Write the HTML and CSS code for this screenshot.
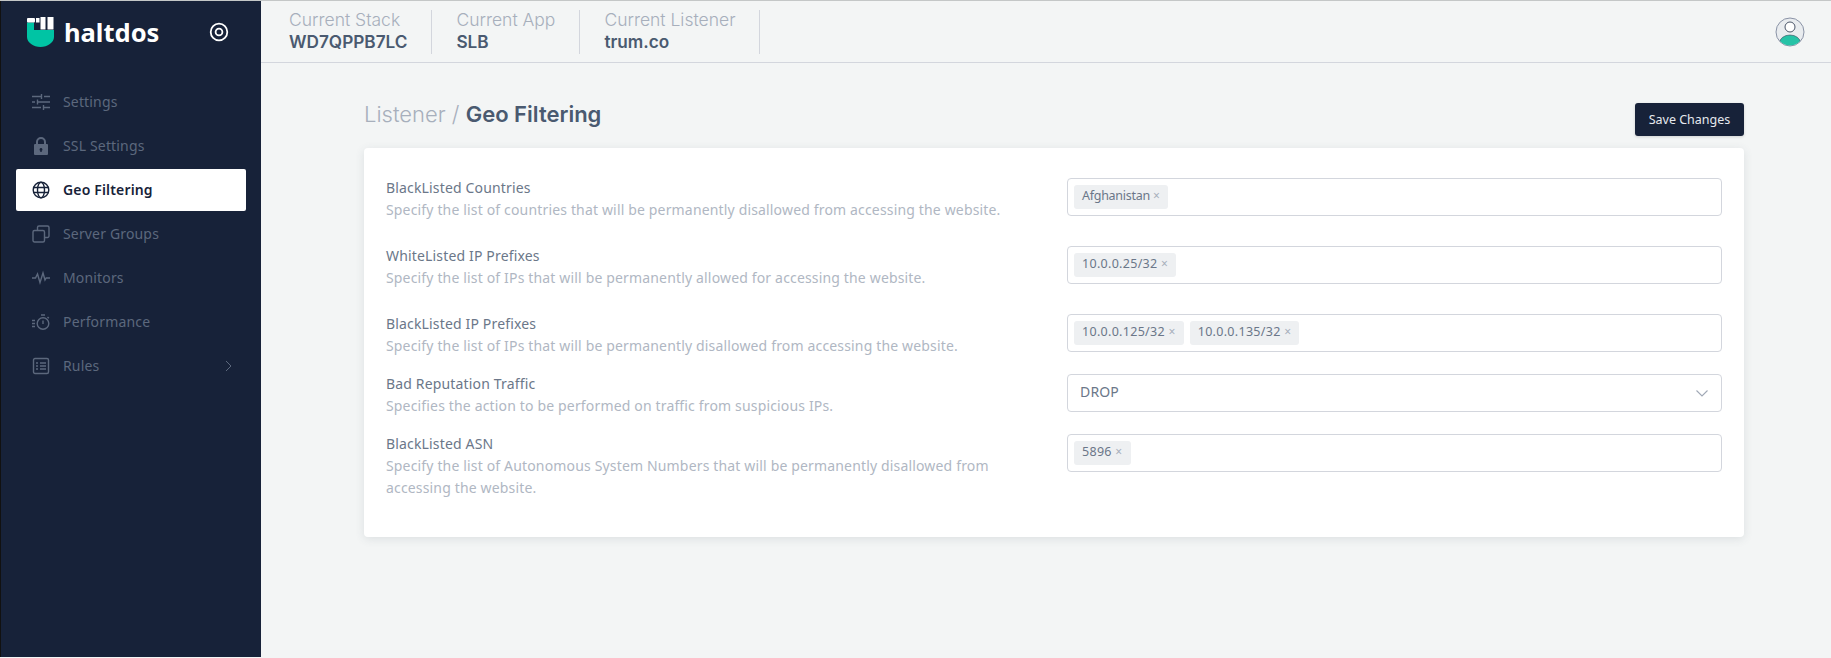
FILE: index.html
```html
<!DOCTYPE html>
<html lang="en">
<head>
<meta charset="utf-8">
<title>Geo Filtering</title>
<link rel="stylesheet" href="styles.css">
</head>
<body>
<div class="app">
  <aside class="sidebar">
    <div class="brand">
      <svg class="logo" width="27" height="30" viewBox="0 0 27 30">
        <path fill="#00c4a4" d="M0 5.500h7V13h20v7c0 5.500-6.500 10-13.500 10S0 25.500 0 20z"/>
        <rect fill="#fff" x="0" y="1" width="8" height="4.500" rx="1"/>
        <rect fill="#fff" x="9" y="1" width="3.500" height="4.500"/>
        <rect fill="#fff" x="13.500" y="0" width="5" height="12.500"/>
        <rect fill="#fff" x="20.500" y="0" width="6" height="12.500"/>
      </svg>
      <span class="brand-name">haltdos</span>
      <svg class="target" width="20" height="20" viewBox="0 0 20 20"><circle cx="10" cy="10" r="8.300" fill="none" stroke="#fff" stroke-width="1.800"/><circle cx="10" cy="10" r="3.400" fill="none" stroke="#fff" stroke-width="1.800"/></svg>
    </div>
    <nav class="nav">
      <a class="nav-item"><svg class="ico" viewBox="0 0 18 18"><path d="M0 3.500h9M12 3.500h6M9.500 1v5M0 9h3M6 9h12M5.500 6.500v5M0 14.500h9M12 14.500h6M11.500 12v5"/></svg><span>Settings</span></a>
      <a class="nav-item"><svg class="ico" viewBox="0 0 18 18"><path class="solid" fill-rule="evenodd" d="M4 7V5a5 5 0 0 1 10 0v2h1a1 1 0 0 1 1 1v9a1 1 0 0 1-1 1H3a1 1 0 0 1-1-1V8a1 1 0 0 1 1-1zm2 0h6V5a3 3 0 0 0-6 0zm3 4a1.500 1.500 0 0 0-.7 2.800V15h1.400v-1.200A1.500 1.500 0 0 0 9 11z"/></svg><span>SSL Settings</span></a>
      <a class="nav-item active"><svg class="ico" viewBox="0 0 18 18"><circle cx="9" cy="9" r="7.800"/><ellipse cx="9" cy="9" rx="3.500" ry="7.800"/><path d="M1.500 6.500h15M1.500 11.500h15"/></svg><span>Geo Filtering</span></a>
      <a class="nav-item"><svg class="ico" viewBox="0 0 18 18"><rect x="1" y="5.500" width="11.500" height="11.500" rx="1.500"/><path d="M5.500 5.500V2.500A1.500 1.500 0 0 1 7 1h8.500A1.500 1.500 0 0 1 17 2.500V11a1.500 1.500 0 0 1-1.500 1.500h-3"/></svg><span>Server Groups</span></a>
      <a class="nav-item"><svg class="ico" viewBox="0 0 18 18"><path d="M0 9h3.500L5.500 5l2.500 8.500L11 4l2 7 1.200-2H18"/></svg><span>Monitors</span></a>
      <a class="nav-item"><svg class="ico" viewBox="0 0 18 18"><circle cx="11" cy="10.500" r="5.800"/><path d="M11 7.500v3.500M9 2h4M15.500 4l1.300 1.300M0 7.500h3M0 10.500h3M0 13.500h3"/></svg><span>Performance</span></a>
      <a class="nav-item"><svg class="ico" viewBox="0 0 18 18"><rect x="1.500" y="1.500" width="15" height="15" rx="1.500"/><path d="M4 6h2M8 6h6M4 9h2M8 9h6M4 12h2M8 12h6"/></svg><span>Rules</span><svg class="chev" width="7" height="12" viewBox="0 0 7 12"><path d="M1 1l5 5-5 5"/></svg></a>
    </nav>
  </aside>
  <div class="main">
    <header class="topbar">
      <div class="crumb"><div class="crumb-key">Current Stack</div><div class="crumb-val">WD7QPPB7LC</div></div>
      <div class="crumb"><div class="crumb-key">Current App</div><div class="crumb-val">SLB</div></div>
      <div class="crumb"><div class="crumb-key">Current Listener</div><div class="crumb-val">trum.co</div></div>
      <svg class="avatar" width="30" height="30" viewBox="0 0 30 30">
        <defs><clipPath id="av"><circle cx="15" cy="15" r="13.500"/></clipPath></defs>
        <circle cx="15" cy="15" r="14" fill="#e9ecef" stroke="#8a93a6" stroke-width="1"/>
        <g clip-path="url(#av)"><ellipse cx="15" cy="26" rx="10.500" ry="8" fill="#26c2a6" stroke="#3f4d63" stroke-width=".6"/></g>
        <circle cx="15" cy="10" r="5" fill="#fff" stroke="#4a5568" stroke-width="1"/>
      </svg>
    </header>
    <main class="content">
      <div class="title-row">
        <h1 class="title"><span class="title-light">Listener / </span><span class="title-strong">Geo Filtering</span></h1>
        <button class="save">Save Changes</button>
      </div>
      <section class="card">
        <div class="row row-lg">
          <div class="label"><div class="name">BlackListed Countries</div><div class="desc">Specify the list of countries that will be permanently disallowed from accessing the website.</div></div>
          <div class="field"><span class="tag tag-word">Afghanistan <i>×</i></span></div>
        </div>
        <div class="row row-lg">
          <div class="label"><div class="name">WhiteListed IP Prefixes</div><div class="desc">Specify the list of IPs that will be permanently allowed for accessing the website.</div></div>
          <div class="field"><span class="tag">10.0.0.25/32 <i>×</i></span></div>
        </div>
        <div class="row">
          <div class="label"><div class="name">BlackListed IP Prefixes</div><div class="desc">Specify the list of IPs that will be permanently disallowed from accessing the website.</div></div>
          <div class="field"><span class="tag">10.0.0.125/32 <i>×</i></span><span class="tag">10.0.0.135/32 <i>×</i></span></div>
        </div>
        <div class="row">
          <div class="label"><div class="name">Bad Reputation Traffic</div><div class="desc">Specifies the action to be performed on traffic from suspicious IPs.</div></div>
          <div class="field select"><span class="select-value">DROP</span><svg class="caret" width="12" height="7" viewBox="0 0 12 7"><path d="M.5.500 6 6 11.500.500"/></svg></div>
        </div>
        <div class="row">
          <div class="label"><div class="name">BlackListed ASN</div><div class="desc">Specify the list of Autonomous System Numbers that will be permanently disallowed from accessing the website.</div></div>
          <div class="field"><span class="tag">5896 <i>×</i></span></div>
        </div>
      </section>
    </main>
  </div>
</div>
</body>
</html>
```
FILE: styles.css
```css
* { box-sizing: border-box; }
html, body { margin: 0; height: 100%; }
body { font-family: "Noto Sans", "Liberation Sans", sans-serif; font-size: 14px; line-height: 22px; letter-spacing: .16px; background: #f3f5f5; color: #4a5a70; overflow: hidden; }
.app { display: flex; height: 657px; border-top: 1px solid #c4c7c7; }
.sidebar { width: 261px; flex: none; background: #172239; border-left: 1px solid #111; }
.brand { display: flex; align-items: center; height: 60px; padding: 1px 0 0 26px; color: #fff; }
.logo { flex: none; }
.brand-name { margin-left: 10px; font-size: 25.500px; letter-spacing: 0; font-weight: 700; line-height: 30px; }
.target { margin-left: 50px; }
.nav { display: flex; flex-direction: column; gap: 2px; margin-top: 20px; padding: 0 15px; }
.nav-item { display: flex; align-items: center; height: 42px; padding-left: 16px; color: #5c687d; border-radius: 2px; }
.nav-item span { margin-left: 13px; margin-bottom: 1px; }
.nav-item.active { background: #fff; color: #172239; font-weight: 600; }
.ico { width: 18px; height: 18px; flex: none; fill: none; stroke: currentColor; stroke-width: 1.400; }
.ico .solid { fill: currentColor; stroke: none; }
.chev { margin-left: auto; margin-right: 14px; fill: none; stroke: #5c687d; stroke-width: 1; }
.main { flex: 1; display: flex; flex-direction: column; min-width: 0; }
.topbar { display: flex; align-items: center; height: 62px; flex: none; padding-left: 28px; border-bottom: 1px solid #d3d6dd; }
.crumb { height: 44px; padding-right: 24px; margin-right: 24px; border-right: 1px solid #d3d6dd; font-family: "Inter", sans-serif; letter-spacing: 0; }
.crumb-key { font-size: 17.500px; font-weight: 300; line-height: 19px; color: #a7afbc; }
.crumb-val { font-size: 17.200px; font-weight: 600; line-height: 25px; color: #4a5a70; }
.avatar { margin-left: auto; margin-right: 26px; }
.content { padding: 22px 87px 0 103px; }
.title-row { display: flex; justify-content: space-between; align-items: flex-start; height: 63px; }
.title { margin: 15px 0 0; font-family: "Inter", sans-serif; letter-spacing: 0; font-size: 22px; line-height: 28px; font-weight: 600; }
.title-light { font-weight: 300; color: #a7afbc; }
.title-strong { color: #4a5a70; }
.save { height: 33px; width: 109px; margin-top: 18px; padding: 0; background: #172239; color: #e6e9ee; border: 0; border-radius: 3px; font: 12.500px "Noto Sans", sans-serif; box-shadow: 0 1px 3px rgba(0,0,0,.15); }
.card { background: #fff; border-radius: 4px; padding: 30px 22px 37px; box-shadow: 0 2px 10px rgba(60,70,90,.12); }
.row { display: grid; grid-template-columns: 1fr 655px; align-items: start; margin-bottom: 16px; }
.row:last-child { margin-bottom: 0; }
.row-lg { margin-bottom: 24px; }
.label { max-width: 640px; margin-top: -1px; margin-bottom: 1px; }
.name { color: #6b7789; }
.desc { color: #b0b7c3; }
.field { display: flex; align-items: center; gap: 6px; height: 38px; padding: 0 6px; border: 1px solid #d3d6dd; border-radius: 4px; background: #fff; }
.tag { display: inline-block; height: 24px; padding: 0 8px; line-height: 22px; font-size: 12.500px; letter-spacing: .3px; color: #6b7789; background: #eef0f2; border-radius: 3px; }
.tag-word { letter-spacing: -.27px; }
.tag i { font-style: normal; color: #a7afbc; font-size: 12px; }
.select { justify-content: space-between; padding: 0 13px 0 12px; color: #6b7789; }
.select-value { margin-bottom: 2px; }
.caret { fill: none; stroke: #a0a8b5; stroke-width: 1.100; }
```
